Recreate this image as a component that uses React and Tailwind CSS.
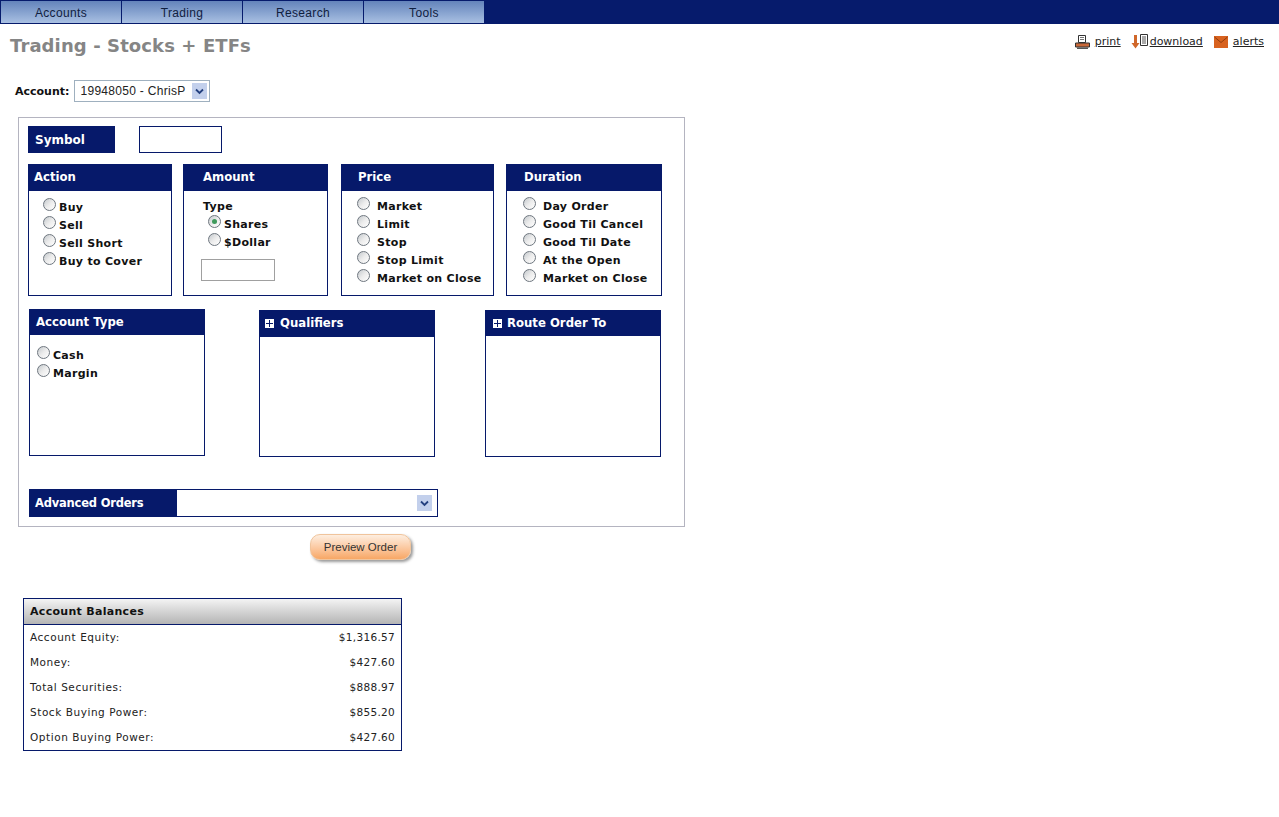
import React from 'react';

const FONT = "font-['DejaVu_Sans',sans-serif]";

// ─── Radio ────────────────────────────────────────────────────────────────────
const Radio = ({ checked }) => (
  <span className="relative w-[13px] h-[13px] -mt-[8px] shrink-0 rounded-full border border-[#6f7780] bg-gradient-to-br from-[#c4c9cd] via-[#ececec] to-white flex items-center justify-center">
    {checked && <span className="w-[5px] h-[5px] rounded-full bg-[#3f9a5c]" />}
  </span>
);

const RadioRow = ({ label, gap = 'gap-[3px]', checked }) => (
  <div className={`flex items-center h-[18px] ${gap}`}>
    <Radio checked={checked} />
    <span className="text-[11px] font-bold text-[#111] tracking-[0.3px] whitespace-nowrap">{label}</span>
  </div>
);

const PlusBox = () => (
  <span className="w-[9px] h-[9px] bg-white flex items-center justify-center shrink-0">
    <svg width="7" height="7" viewBox="0 0 7 7"><path d="M3 0h1v3h3v1H4v3H3V4H0V3h3z" fill="#06196a" /></svg>
  </span>
);

// ─── Panel box ────────────────────────────────────────────────────────────────
const Box = ({ title, className, headClass = 'pl-[5px]', headH = 'h-[26px]', children }) => (
  <div className={`border border-[#06196a] bg-white ${className}`}>
    <div className={`${headH} ${headClass} bg-[#06196a] flex items-center text-white text-[11.700px] font-bold whitespace-nowrap`}>
      {title}
    </div>
    {children}
  </div>
);

const SelectArrow = () => (
  <span className="w-[15px] h-[16px] bg-[#c3d0ec] flex items-center justify-center">
    <svg width="9" height="7" viewBox="0 0 9 7"><path d="M1 1.500l3.500 3.500L8 1.500" fill="none" stroke="#24407f" strokeWidth="1.8" /></svg>
  </span>
);

const PrintIcon = () => (
  <svg width="15" height="15" viewBox="0 0 15 15">
    <path d="M3.500 .5h7v7h-7z" fill="#fff" stroke="#333" />
    <path d="M5 2.500h4M5 4.500h4" stroke="#777" />
    <path d="M.5 8h14v4H.5z" fill="#c9693a" stroke="#333" />
    <path d="M2 12.500h11v1.500H2z" fill="#555" />
  </svg>
);

const DownloadIcon = () => (
  <svg width="18" height="16" viewBox="0 0 18 16">
    <path d="M3 1h3v8h2.500L4.500 14.500 .5 9H3z" fill="#d0672a" />
    <path d="M9.500 .5h7v11h-7z" fill="#fff" stroke="#333" />
    <path d="M11 3h4M11 5h4M11 7h4M11 9h4" stroke="#555" />
  </svg>
);

const MailIcon = () => (
  <svg width="14" height="12" viewBox="0 0 14 12">
    <path d="M0 0h14v12H0z" fill="#d8621f" />
    <path d="M.5 1l6.500 5.500L13.500 1" fill="none" stroke="#8f3c0c" />
  </svg>
);

const NAV = ['Accounts', 'Trading', 'Research', 'Tools'];

const BALANCES = [
  ['Account Equity:', '$1,316.57'],
  ['Money:', '$427.60'],
  ['Total Securities:', '$888.97'],
  ['Stock Buying Power:', '$855.20'],
  ['Option Buying Power:', '$427.60'],
];

export default function App() {
  return (
    <div className={`${FONT} w-[1279px] h-[817px] bg-white overflow-hidden`}>
      {/* Top nav */}
      <div className="h-[24px] bg-[#061b6c] flex py-[1px] pl-[1px]">
        {NAV.map((n) => (
          <div
            key={n}
            className="w-[121px] pt-[2px] border-r border-[#061b6c] bg-gradient-to-b from-[#6484bb] to-[#a9c0e2] flex items-center justify-center font-['Liberation_Sans',sans-serif] text-[12px] text-[#10203f] tracking-[0.35px]"
          >
            {n}
          </div>
        ))}
      </div>

      {/* Title + tools */}
      <div className="flex justify-between pl-[10px] pr-[15px]">
        <h1 className="mt-[9px] text-[18px] leading-[25px] font-bold text-[#858585] tracking-[0.1px]">Trading - Stocks + ETFs</h1>
        <div className="mt-[10px] flex items-start text-[11px] text-[#222] underline leading-[16px]">
          <span className="flex items-center gap-[5px]"><PrintIcon /><span>print</span></span>
          <span className="ml-[10px] flex items-center gap-[1px]"><DownloadIcon /><span>download</span></span>
          <span className="ml-[11px] flex items-center gap-[5px]"><MailIcon /><span>alerts</span></span>
        </div>
      </div>

      {/* Account select */}
      <div className="mt-[22px] ml-[15px] flex items-center gap-[5px]">
        <span className="pt-[3px] text-[11px] font-bold text-[#111]">Account:</span>
        <div className="w-[136px] h-[22px] border border-[#9fb0bf] flex items-center justify-between pl-[5px] pr-[2px]">
          <span className="font-['Liberation_Sans',sans-serif] text-[12px] text-[#222] tracking-[0.3px] whitespace-nowrap">19948050 - ChrisP</span>
          <SelectArrow />
        </div>
      </div>

      {/* Order panel */}
      <div className="mt-[15px] ml-[18px] w-[667px] h-[410px] border border-[#b4b4c0] pt-[8px] pl-[9px]">
        <div className="flex gap-[24px]">
          <div className="w-[87px] h-[27px] bg-[#06196a] text-white text-[12px] font-bold flex items-center pl-[7px]">Symbol</div>
          <div className="w-[83px] h-[27px] border border-[#06196a]" />
        </div>

        <div className="mt-[11px] flex items-start">
          <Box title="Action" className="w-[144px] h-[132px]">
            <div className="pl-[14px] pt-[8px]">
              {['Buy', 'Sell', 'Sell Short', 'Buy to Cover'].map((l) => <RadioRow key={l} label={l} />)}
            </div>
          </Box>
          <Box title="Amount" className="ml-[11px] w-[145px] h-[132px]" headClass="pl-[19px]">
            <div className="pl-[19px] pt-[7px] text-[11px] font-bold text-[#111] tracking-[0.3px] leading-[18px]">Type</div>
            <div className="pl-[24px]">
              <RadioRow label="Shares" checked />
              <RadioRow label="$Dollar" />
            </div>
            <div className="ml-[17px] mt-[7px] w-[74px] h-[22px] border border-[#a0a0a0]" />
          </Box>
          <Box title="Price" className="ml-[13px] w-[153px] h-[132px]" headClass="pl-[16px]">
            <div className="pl-[15px] pt-[7px]">
              {['Market', 'Limit', 'Stop', 'Stop Limit', 'Market on Close'].map((l) => <RadioRow key={l} label={l} gap="gap-[7px]" />)}
            </div>
          </Box>
          <Box title="Duration" className="ml-[12px] w-[156px] h-[132px]" headClass="pl-[17px]">
            <div className="pl-[16px] pt-[7px]">
              {['Day Order', 'Good Til Cancel', 'Good Til Date', 'At the Open', 'Market on Close'].map((l) => <RadioRow key={l} label={l} gap="gap-[7px]" />)}
            </div>
          </Box>
        </div>

        <div className="mt-[13px] flex items-start">
          <Box title="Account Type" className="ml-[1px] w-[176px] h-[147px]" headClass="pl-[6px]" headH="h-[25px]">
            <div className="pl-[7px] pt-[12px]">
              <RadioRow label="Cash" />
              <RadioRow label="Margin" />
            </div>
          </Box>
          <Box
            title={<span className="flex items-center gap-[6px]"><PlusBox />Qualifiers</span>}
            className="mt-[1px] ml-[54px] w-[176px] h-[147px]"
            headClass="pl-[5px]"
          />
          <Box
            title={<span className="flex items-center gap-[5px]"><PlusBox />Route Order To</span>}
            className="mt-[1px] ml-[50px] w-[176px] h-[147px]"
            headClass="pl-[7px]"
            headH="h-[25px]"
          />
        </div>

        <div className="mt-[32px] ml-[1px] w-[409px] h-[28px] border border-[#06196a] flex items-center">
          <div className="w-[147px] h-full bg-[#06196a] text-white text-[11.500px] tracking-[-0.2px] font-bold flex items-center pl-[5px] pt-[1px]">Advanced Orders</div>
          <div className="flex-1 flex justify-end pr-[5px]"><SelectArrow /></div>
        </div>
      </div>

      {/* Preview button */}
      <div className="mt-[7px] ml-[310px] w-[101px] h-[26px] pt-[1px] rounded-[10px] border border-[#f0c49c] bg-gradient-to-b from-[#fdeee0] to-[#f7a765] shadow-[2px_2px_3px_#999] flex items-center justify-center font-['Liberation_Sans',sans-serif] text-[11.500px] text-[#333]">
        Preview Order
      </div>

      {/* Balances */}
      <div className="mt-[38px] ml-[23px] w-[379px] h-[153px] border border-[#06196a]">
        <div className="h-[26px] pt-[1px] bg-gradient-to-b from-[#f4f4f4] to-[#b5b5b5] border-b border-[#06196a] flex items-center pl-[6px] text-[11px] font-bold text-[#111] tracking-[0.3px]">
          Account Balances
        </div>
        {BALANCES.map(([k, v]) => (
          <div key={k} className="h-[25px] flex items-center justify-between px-[6px] text-[10.500px] text-[#222] tracking-[0.3px]">
            <span className="tracking-[0.55px]">{k}</span>
            <span>{v}</span>
          </div>
        ))}
      </div>
    </div>
  );
}
